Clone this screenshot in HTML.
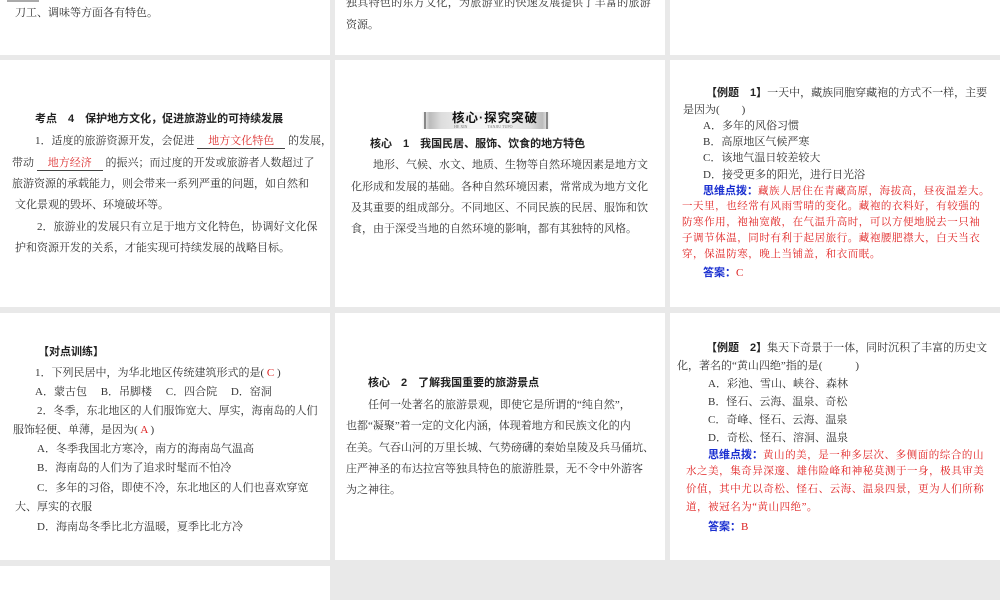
<!DOCTYPE html>
<html><head><meta charset="utf-8"><style>
*{margin:0;padding:0;box-sizing:border-box}
body{width:1000px;height:600px;background:#e9e9e9;position:relative;overflow:hidden;font-family:"Liberation Serif","Noto Serif CJK SC",serif;color:#333}
.s{position:absolute;background:#fff;overflow:hidden}
.l{position:absolute;white-space:nowrap;font-size:11px;line-height:14px}
.b{font-family:"Liberation Sans","Noto Sans CJK SC",sans-serif;font-weight:bold;color:#222}
.r{color:#d22}
.bl{color:#1a2fd0;font-family:"Liberation Sans","Noto Sans CJK SC",sans-serif;font-weight:bold}
.u{display:inline-block;border-bottom:1px solid #444;text-align:center;color:#d33}
.rk{color:#e02020;font-size:10.5px;letter-spacing:.55px}
</style></head><body>
<div class="s" style="left:0;top:0;width:330px;height:55px"></div>
<div class="s" style="left:335px;top:0;width:330px;height:55px"></div>
<div class="s" style="left:670px;top:0;width:330px;height:55px"></div>
<div class="s" style="left:0;top:60px;width:330px;height:247px"></div>
<div class="s" style="left:335px;top:60px;width:330px;height:247px"></div>
<div class="s" style="left:670px;top:60px;width:330px;height:247px"></div>
<div class="s" style="left:0;top:313px;width:330px;height:247px"></div>
<div class="s" style="left:335px;top:313px;width:330px;height:247px"></div>
<div class="s" style="left:670px;top:313px;width:330px;height:247px"></div>
<div class="s" style="left:0;top:566px;width:330px;height:34px"></div>

<!-- row1 -->
<div style="position:absolute;left:7px;top:0;width:32px;height:2px;background:#aaa"></div>
<div class="l" style="left:15px;top:6px">刀工、调味等方面各有特色。</div>
<div class="l" style="left:346px;top:-4px;letter-spacing:.3px">独具特色的东方文化，为旅游业的快速发展提供了丰富的旅游</div>
<div class="l" style="left:346px;top:18px">资源。</div>

<!-- row2 col1 -->
<div class="l b" style="left:35px;top:112px">考点　4　保护地方文化，促进旅游业的可持续发展</div>
<div class="l" style="left:35px;top:134px">1．适度的旅游资源开发，会促进 <span class="u" style="width:88px">地方文化特色</span> 的发展，</div>
<div class="l" style="left:12px;top:156px">带动 <span class="u" style="width:66px">地方经济</span> 的振兴；而过度的开发或旅游者人数超过了</div>
<div class="l" style="left:12px;top:177px">旅游资源的承载能力，则会带来一系列严重的问题，如自然和</div>
<div class="l" style="left:15px;top:198px">文化景观的毁坏、环境破坏等。</div>
<div class="l" style="left:37px;top:220px">2．旅游业的发展只有立足于地方文化特色，协调好文化保</div>
<div class="l" style="left:15px;top:241px">护和资源开发的关系，才能实现可持续发展的战略目标。</div>

<!-- row2 col2 -->
<div style="position:absolute;left:422px;top:112px;width:128px;height:17px;background:linear-gradient(90deg,#fff 0,#bbb 6%,#ddd 15%,#f4f4f4 40%,#f4f4f4 60%,#ddd 85%,#bbb 94%,#fff 100%)"></div>
<div style="position:absolute;left:424px;top:112px;width:2px;height:17px;background:#888"></div>
<div style="position:absolute;left:546px;top:112px;width:2px;height:17px;background:#888"></div>
<div class="l b" style="left:452px;top:111px;font-size:12.5px;letter-spacing:1px;color:#111">核心·探究突破</div>
<div class="l" style="left:454px;top:124px;font-size:4px;line-height:5px;color:#777">HE XIN　　　　　TANJIU TUPO</div>
<div class="l b" style="left:370px;top:137px">核心　1　我国民居、服饰、饮食的地方特色</div>
<div class="l" style="left:373px;top:158px">地形、气候、水文、地质、生物等自然环境因素是地方文</div>
<div class="l" style="left:351px;top:180px">化形成和发展的基础。各种自然环境因素，常常成为地方文化</div>
<div class="l" style="left:351px;top:201px">及其重要的组成部分。不同地区、不同民族的民居、服饰和饮</div>
<div class="l" style="left:351px;top:222px">食，由于深受当地的自然环境的影响，都有其独特的风格。</div>

<!-- row2 col3 -->
<div class="l" style="left:706px;top:86px"><span class="b">【例题　1】</span>一天中，藏族同胞穿藏袍的方式不一样，主要</div>
<div class="l" style="left:683px;top:103px">是因为(　　)</div>
<div class="l" style="left:703px;top:119px">A．多年的风俗习惯</div>
<div class="l" style="left:703px;top:135px">B．高原地区气候严寒</div>
<div class="l" style="left:703px;top:151px">C．该地气温日较差较大</div>
<div class="l" style="left:703px;top:168px">D．接受更多的阳光，进行日光浴</div>
<div class="l" style="left:703px;top:184px"><span class="bl">思维点拨：</span><span class="rk">藏族人居住在青藏高原，海拔高，昼夜温差大。</span></div>
<div class="l rk" style="left:682px;top:200px">一天里，也经常有风雨雪晴的变化。藏袍的衣料好，有较强的</div>
<div class="l rk" style="left:682px;top:216px">防寒作用，袍袖宽敞，在气温升高时，可以方便地脱去一只袖</div>
<div class="l rk" style="left:682px;top:232px">子调节体温，同时有利于起居旅行。藏袍腰肥襟大，白天当衣</div>
<div class="l rk" style="left:682px;top:248px">穿，保温防寒，晚上当铺盖，和衣而眠。</div>
<div class="l" style="left:703px;top:266px"><span class="bl">答案：</span><span class="r">C</span></div>

<!-- row3 col1 -->
<div class="l b" style="left:38px;top:345px">【对点训练】</div>
<div class="l" style="left:35px;top:366px">1．下列民居中，为华北地区传统建筑形式的是( <span class="r">C</span> )</div>
<div class="l" style="left:35px;top:385px">A．蒙古包　 B．吊脚楼　 C．四合院　 D．窑洞</div>
<div class="l" style="left:37px;top:404px">2．冬季，东北地区的人们服饰宽大、厚实，海南岛的人们</div>
<div class="l" style="left:13px;top:423px">服饰轻便、单薄，是因为(  <span class="r">A</span> )</div>
<div class="l" style="left:37px;top:442px">A．冬季我国北方寒冷，南方的海南岛气温高</div>
<div class="l" style="left:37px;top:461px">B．海南岛的人们为了追求时髦而不怕冷</div>
<div class="l" style="left:37px;top:481px">C．多年的习俗，即使不冷，东北地区的人们也喜欢穿宽</div>
<div class="l" style="left:15px;top:500px">大、厚实的衣服</div>
<div class="l" style="left:37px;top:520px">D．海南岛冬季比北方温暖，夏季比北方冷</div>

<!-- row3 col2 -->
<div class="l b" style="left:368px;top:376px">核心　2　了解我国重要的旅游景点</div>
<div class="l" style="left:368px;top:398px">任何一处著名的旅游景观，即使它是所谓的“纯自然”，</div>
<div class="l" style="left:346px;top:419px">也都“凝聚”着一定的文化内涵，体现着地方和民族文化的内</div>
<div class="l" style="left:346px;top:441px">在美。气吞山河的万里长城、气势磅礴的秦始皇陵及兵马俑坑、</div>
<div class="l" style="left:346px;top:462px">庄严神圣的布达拉宫等独具特色的旅游胜景，无不令中外游客</div>
<div class="l" style="left:346px;top:483px">为之神往。</div>

<!-- row3 col3 -->
<div class="l" style="left:706px;top:341px"><span class="b">【例题　2】</span>集天下奇景于一体，同时沉积了丰富的历史文</div>
<div class="l" style="left:677px;top:359px">化，著名的“黄山四绝”指的是(　　　)</div>
<div class="l" style="left:708px;top:377px">A．彩池、雪山、峡谷、森林</div>
<div class="l" style="left:708px;top:395px">B．怪石、云海、温泉、奇松</div>
<div class="l" style="left:708px;top:413px">C．奇峰、怪石、云海、温泉</div>
<div class="l" style="left:708px;top:431px">D．奇松、怪石、溶洞、温泉</div>
<div class="l" style="left:708px;top:448px"><span class="bl">思维点拨：</span><span class="rk">黄山的美，是一种多层次、多侧面的综合的山</span></div>
<div class="l rk" style="left:686px;top:465px">水之美，集奇异深邃、雄伟险峰和神秘莫测于一身，极具审美</div>
<div class="l rk" style="left:686px;top:483px">价值，其中尤以奇松、怪石、云海、温泉四景，更为人们所称</div>
<div class="l rk" style="left:686px;top:501px">道，被冠名为“黄山四绝”。</div>
<div class="l" style="left:708px;top:520px"><span class="bl">答案：</span><span class="r">B</span></div>
</body></html>
